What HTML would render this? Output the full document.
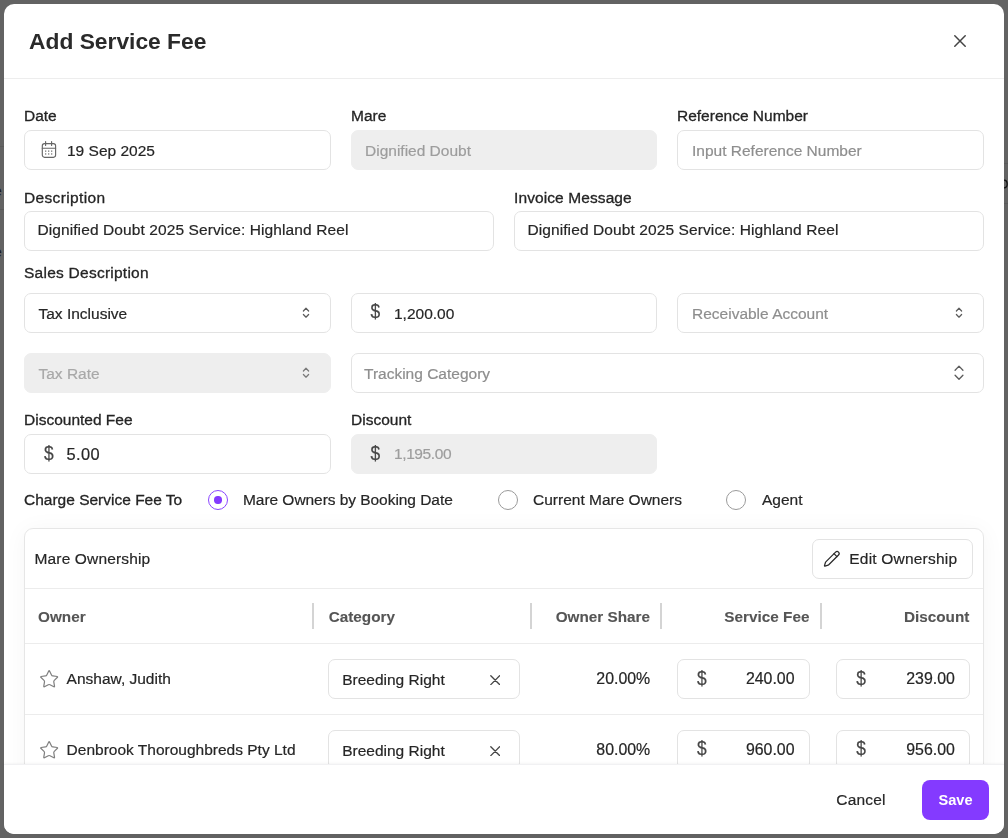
<!DOCTYPE html>
<html><head><meta charset="utf-8">
<style>
*{box-sizing:border-box;margin:0;padding:0}
html,body{width:1008px;height:838px;overflow:hidden;background:#636363;-webkit-font-smoothing:antialiased;font-family:"Liberation Sans",sans-serif;color:#262626}
.a{position:absolute}
.modal{position:absolute;left:4px;top:4px;width:1000px;height:830px;background:#fff;border-radius:10px;overflow:hidden}
.t{position:absolute;white-space:nowrap;font-size:15.5px;line-height:20px;-webkit-text-stroke:0.2px currentColor}
.lbl{color:#242424;-webkit-text-stroke:0.3px #242424}
.box{position:absolute;height:40px;border:1px solid #e3e3e3;border-radius:7px;background:#fff}
.dis{background:#eeeeee;border-color:#eeeeee}
.ph{color:#8e8e8e}
.hd{font-weight:700;color:#555;font-size:15.3px;-webkit-text-stroke:0.1px #555}
.sep{position:absolute;width:2px;height:26px;background:#d4d4d4;top:603px}
.dol{font-size:17.4px;transform:scaleY(1.16);color:#454545}
.num{font-size:15.9px}
.hl{position:absolute;height:1px;background:#ececec}
</style></head><body>
<div class="a" style="left:-6px;top:183px;font-size:14px;line-height:16px;color:#1a1a1a">e</div>
<div class="a" style="left:-6px;top:244px;font-size:14px;line-height:16px;color:#1a1a1a">e</div>
<div class="a" style="left:0;top:209px;width:4px;height:1px;background:#5a5a5a"></div>
<div class="a" style="left:0;top:146px;width:4px;height:1px;background:#5a5a5a"></div>
<div class="a" style="left:1004px;top:163px;width:4px;height:1px;background:#5a5a5a"></div>
<div class="a" style="left:1004px;top:203px;width:4px;height:1px;background:#5a5a5a"></div>
<svg class="a" style="left:1003px;top:179px" width="5" height="10" viewBox="0 0 5 10"><path d="M1 1.2C3.2 1.2 4.2 3 4.2 5S3.2 8.8 1 8.8" fill="none" stroke="#111" stroke-width="1.3"/></svg>
<div class="modal">
</div>
<!-- Everything positioned in page coordinates -->
<div class="a" style="left:0;top:0;width:1008px;height:838px;will-change:transform">
  <!-- header -->
  <div class="t" style="left:29px;top:27px;font-size:22.8px;line-height:28px;font-weight:700;color:#2a2a2a;-webkit-text-stroke:0">Add Service Fee</div>
  <svg class="a" style="left:954px;top:35px" width="12" height="12" viewBox="0 0 12 12"><path d="M0.8 0.8L11.2 11.2M11.2 0.8L0.8 11.2" stroke="#444" stroke-width="1.5" stroke-linecap="round"/></svg>
  <div class="hl" style="left:4px;top:78px;width:1000px;background:#ededed"></div>

  <!-- row 1 -->
  <div class="t lbl" style="left:24px;top:106px">Date</div>
  <div class="t lbl" style="left:351px;top:106px">Mare</div>
  <div class="t lbl" style="left:677px;top:106px">Reference Number</div>
  <div class="box" style="left:24px;top:130px;width:307px"></div>
  <div class="box dis" style="left:351px;top:130px;width:306px"></div>
  <div class="box" style="left:677px;top:130px;width:307px"></div>
  <div class="t" style="left:67px;top:140.6px">19 Sep 2025</div>
  <div class="t ph" style="left:365px;top:140.6px;color:#9d9d9d">Dignified Doubt</div>
  <div class="t ph" style="left:692px;top:140.6px">Input Reference Number</div>

  <!-- row 2 -->
  <div class="t lbl" style="left:24px;top:187.5px;letter-spacing:0.35px">Description</div>
  <div class="t lbl" style="left:514px;top:187.5px;letter-spacing:0.1px">Invoice Message</div>
  <div class="box" style="left:24px;top:211px;width:470px"></div>
  <div class="box" style="left:514px;top:211px;width:470px"></div>
  <div class="t" style="left:37.4px;top:220.3px;letter-spacing:0.1px">Dignified Doubt 2025 Service: Highland Reel</div>
  <div class="t" style="left:527.4px;top:220.3px;letter-spacing:0.1px">Dignified Doubt 2025 Service: Highland Reel</div>

  <!-- sales -->
  <div class="t lbl" style="left:24px;top:263.3px;letter-spacing:0.25px">Sales Description</div>
  <div class="box" style="left:24px;top:293px;width:307px"></div>
  <div class="box" style="left:351px;top:293px;width:306px"></div>
  <div class="box" style="left:677px;top:293px;width:307px"></div>
  <div class="t" style="left:38.5px;top:303.6px">Tax Inclusive</div>
  <div class="t dol" style="left:370.5px;top:300.8px">$</div>
  <div class="t" style="left:394px;top:303.6px">1,200.00</div>
  <div class="t ph" style="left:692px;top:303.6px">Receivable Account</div>

  <div class="box dis" style="left:24px;top:353px;width:307px"></div>
  <div class="box" style="left:351px;top:353px;width:633px"></div>
  <div class="t ph" style="left:38.5px;top:363.6px;color:#a8a8a8">Tax Rate</div>
  <div class="t ph" style="left:364px;top:363.6px">Tracking Category</div>

  <!-- discounted fee -->
  <div class="t lbl" style="left:24px;top:410px">Discounted Fee</div>
  <div class="t lbl" style="left:351px;top:410px">Discount</div>
  <div class="box" style="left:24px;top:434px;width:307px"></div>
  <div class="box dis" style="left:351px;top:434px;width:306px"></div>
  <div class="t dol" style="left:44px;top:442.5px">$</div>
  <div class="t" style="left:66.5px;top:444.3px;letter-spacing:0.4px;font-size:16.4px">5.00</div>
  <div class="t dol" style="left:370.5px;top:442.5px">$</div>
  <div class="t ph" style="left:394px;top:444px;color:#9d9d9d;letter-spacing:-0.4px">1,195.00</div>

  <!-- radios -->
  <div class="t lbl" style="left:24px;top:490px">Charge Service Fee To</div>
  <div class="t" style="left:243px;top:490px;letter-spacing:-0.05px">Mare Owners by Booking Date</div>
  <div class="t" style="left:533px;top:490px">Current Mare Owners</div>
  <div class="t" style="left:762px;top:490px">Agent</div>

  <!-- card -->
  <div class="a" style="left:24px;top:528px;width:960px;height:300px;border:1px solid #e6e6e6;border-radius:9px;background:#fff;box-shadow:0 2px 24px rgba(0,0,0,0.045)"></div>
  <div class="t" style="left:34.5px;top:549.2px;letter-spacing:0.15px">Mare Ownership</div>
  <div class="box" style="left:812px;top:539px;width:161px"></div>
  <div class="t" style="left:849.3px;top:549.2px;letter-spacing:0.2px">Edit Ownership</div>
  <div class="hl" style="left:25px;top:588px;width:958px"></div>

  <!-- table header -->
  <div class="t hd" style="left:38px;top:607.4px">Owner</div>
  <div class="sep" style="left:312px"></div>
  <div class="t hd" style="left:328.7px;top:607px">Category</div>
  <div class="sep" style="left:529.5px"></div>
  <div class="t hd" style="right:358px;top:607px">Owner Share</div>
  <div class="sep" style="left:660px"></div>
  <div class="t hd" style="right:198.6px;top:607px">Service Fee</div>
  <div class="sep" style="left:820px"></div>
  <div class="t hd" style="right:38.6px;top:607px">Discount</div>
  <div class="hl" style="left:25px;top:643px;width:958px"></div>

  <!-- row 1 -->
  <div class="t" style="left:66.6px;top:669.2px">Anshaw, Judith</div>
  <div class="box" style="left:328px;top:659px;width:192px"></div>
  <div class="t" style="left:342.2px;top:669.6px">Breeding Right</div>
  <div class="t num" style="right:357.8px;top:669.2px">20.00%</div>
  <div class="box" style="left:677px;top:659px;width:133px"></div>
  <div class="t dol" style="left:697px;top:667.5px">$</div>
  <div class="t num" style="right:213.5px;top:669.2px">240.00</div>
  <div class="box" style="left:836px;top:659px;width:134px"></div>
  <div class="t dol" style="left:856.3px;top:667.5px">$</div>
  <div class="t num" style="right:53.2px;top:669.2px">239.00</div>
  <div class="hl" style="left:25px;top:713.5px;width:958px"></div>

  <!-- row 2 -->
  <div class="t" style="left:66.6px;top:740.1px">Denbrook Thoroughbreds Pty Ltd</div>
  <div class="box" style="left:328px;top:730px;width:192px"></div>
  <div class="t" style="left:342.2px;top:740.5px">Breeding Right</div>
  <div class="t num" style="right:357.8px;top:740.1px">80.00%</div>
  <div class="box" style="left:677px;top:730px;width:133px"></div>
  <div class="t dol" style="left:697px;top:738.4px">$</div>
  <div class="t num" style="right:213.5px;top:740.1px">960.00</div>
  <div class="box" style="left:836px;top:730px;width:134px"></div>
  <div class="t dol" style="left:856.3px;top:738.4px">$</div>
  <div class="t num" style="right:53.2px;top:740.1px">956.00</div>


  <!-- calendar -->
  <svg class="a" style="left:41px;top:141px" width="16" height="17" viewBox="0 0 16 17" fill="none" stroke="#666" stroke-width="1.15">
    <rect x="1.3" y="2.6" width="13.3" height="13.7" rx="2.2"/>
    <path d="M1.3 7.2H14.6M4.6 0.6V4.4M10.6 0.6V4.4" stroke-linecap="round"/>
    <g fill="#8a8a8a" stroke="none"><rect x="4" y="9.4" width="1.3" height="1.5"/><rect x="7" y="9.4" width="1.3" height="1.5"/><rect x="10" y="9.4" width="1.3" height="1.5"/><rect x="4" y="12.2" width="1.3" height="1.5"/><rect x="7" y="12.2" width="1.3" height="1.5"/><rect x="10" y="12.2" width="1.3" height="1.5"/></g>
  </svg>
<svg class="a" style="left:300.8px;top:305.5px" width="10" height="14" viewBox="0 0 10 14" fill="none" stroke="#5c5c5c" stroke-width="1.25" stroke-linecap="round" stroke-linejoin="round"><path d="M2.4 5L5 2.2L7.6 5M2.4 8.5L5 11.2L7.6 8.5"/></svg>
<svg class="a" style="left:953.7px;top:305.5px" width="10" height="14" viewBox="0 0 10 14" fill="none" stroke="#5c5c5c" stroke-width="1.25" stroke-linecap="round" stroke-linejoin="round"><path d="M2.4 5L5 2.2L7.6 5M2.4 8.5L5 11.2L7.6 8.5"/></svg>
<svg class="a" style="left:300.8px;top:365.5px" width="10" height="14" viewBox="0 0 10 14" fill="none" stroke="#7a7a7a" stroke-width="1.25" stroke-linecap="round" stroke-linejoin="round"><path d="M2.4 5L5 2.2L7.6 5M2.4 8.5L5 11.2L7.6 8.5"/></svg>
<svg class="a" style="left:951.5px;top:362.5px" width="14" height="20" viewBox="0 0 10 14" fill="none" stroke="#5c5c5c" stroke-width="0.95" stroke-linecap="round" stroke-linejoin="round"><path d="M2.2 5L5 2.1L7.8 5M2.2 8.6L5 11.5L7.8 8.6"/></svg>

  <!-- radios -->
  <div class="a" style="left:208px;top:490px;width:20px;height:20px;border-radius:50%;border:1.15px solid #8a45ff"></div>
  <div class="a" style="left:214.3px;top:496.3px;width:7.4px;height:7.4px;border-radius:50%;background:#843aff"></div>
  <div class="a" style="left:498px;top:490px;width:20px;height:20px;border-radius:50%;border:1.3px solid #9a9a9a"></div>
  <div class="a" style="left:726px;top:490px;width:20px;height:20px;border-radius:50%;border:1.3px solid #9a9a9a"></div>
  <!-- pencil -->
  <svg class="a" style="left:823px;top:549.6px" width="17.6" height="17.6" viewBox="0 0 24 24" fill="none" stroke="#2a2a2a" stroke-width="1.7" stroke-linecap="round" stroke-linejoin="round"><path d="M21.174 6.812a1 1 0 0 0-3.986-3.987L3.842 16.174a2 2 0 0 0-.5.83l-1.321 4.352a.5.5 0 0 0 .623.622l4.353-1.32a2 2 0 0 0 .83-.497z"/><path d="m15 5 4 4"/></svg>
<svg class="a" style="left:38.8px;top:668.8px" width="20.3" height="20.3" viewBox="0 0 24 24" fill="none" stroke="#808080" stroke-width="1.45" stroke-linecap="round" stroke-linejoin="round"><path d="M11.525 2.295a.53.53 0 0 1 .95 0l2.31 4.679a2.123 2.123 0 0 0 1.595 1.16l5.166.756a.53.53 0 0 1 .294.904l-3.736 3.638a2.123 2.123 0 0 0-.611 1.878l.882 5.14a.53.53 0 0 1-.771.56l-4.618-2.428a2.122 2.122 0 0 0-1.973 0L6.396 21.01a.53.53 0 0 1-.77-.56l.881-5.139a2.122 2.122 0 0 0-.611-1.879L2.16 9.795a.53.53 0 0 1 .294-.906l5.165-.755a2.122 2.122 0 0 0 1.597-1.16z"/></svg>
<svg class="a" style="left:38.8px;top:739.7px" width="20.3" height="20.3" viewBox="0 0 24 24" fill="none" stroke="#808080" stroke-width="1.45" stroke-linecap="round" stroke-linejoin="round"><path d="M11.525 2.295a.53.53 0 0 1 .95 0l2.31 4.679a2.123 2.123 0 0 0 1.595 1.16l5.166.756a.53.53 0 0 1 .294.904l-3.736 3.638a2.123 2.123 0 0 0-.611 1.878l.882 5.14a.53.53 0 0 1-.771.56l-4.618-2.428a2.122 2.122 0 0 0-1.973 0L6.396 21.01a.53.53 0 0 1-.77-.56l.881-5.139a2.122 2.122 0 0 0-.611-1.879L2.16 9.795a.53.53 0 0 1 .294-.906l5.165-.755a2.122 2.122 0 0 0 1.597-1.16z"/></svg>
<svg class="a" style="left:489.8px;top:674.6px" width="10.4" height="10.4" viewBox="0 0 10.4 10.4" fill="none" stroke="#444" stroke-width="1.3" stroke-linecap="round"><path d="M0.8 0.8L9.6 9.6M9.6 0.8L0.8 9.6"/></svg>
<svg class="a" style="left:489.8px;top:745.5px" width="10.4" height="10.4" viewBox="0 0 10.4 10.4" fill="none" stroke="#444" stroke-width="1.3" stroke-linecap="round"><path d="M0.8 0.8L9.6 9.6M9.6 0.8L0.8 9.6"/></svg>
  <!-- footer -->
  <div class="a" style="left:4px;top:764px;width:1000px;height:70px;background:#fff;border-radius:0 0 10px 10px;border-top:1px solid #f1f1f3;box-shadow:0 -1px 3px rgba(0,0,0,0.045)"></div>
  <div class="t" style="left:836.3px;top:790px;letter-spacing:0.2px">Cancel</div>
  <div class="a" style="left:922px;top:780px;width:67px;height:40px;border-radius:8px;background:#843aff"></div>
  <div class="t" style="left:938.5px;top:790px;color:#fff;font-weight:700;font-size:14.6px;-webkit-text-stroke:0">Save</div>
</div>
</body></html>
